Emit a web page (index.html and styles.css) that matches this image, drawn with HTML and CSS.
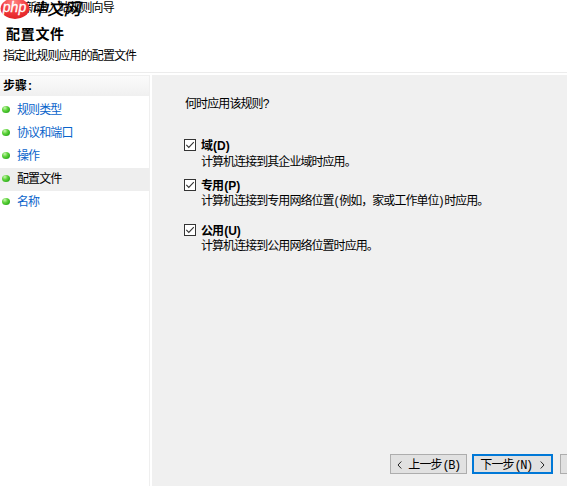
FILE: index.html
```html
<!DOCTYPE html>
<html lang="zh-CN">
<head>
<meta charset="utf-8">
<title>新建入站规则向导</title>
<link rel="stylesheet" href="styles.css">
</head>
<body>
<div class="wizard">
  <header class="header">
    <div class="titlebar">新建入站规则向导</div>
    <h1 class="title">配置文件</h1>
    <p class="subtitle">指定此规则应用的配置文件</p>
    <div class="watermark">
      <svg class="watermark-logo" width="30" height="20" viewBox="0 0 30 20">
        <defs>
          <radialGradient id="red" cx=".45" cy=".2" r=".85">
            <stop offset="0" stop-color="#ff8585"/>
            <stop offset=".5" stop-color="#f33c3e"/>
            <stop offset="1" stop-color="#df2024"/>
          </radialGradient>
        </defs>
        <ellipse cx="15" cy="8.5" rx="14.4" ry="10.4" fill="url(#red)"/>
        <text x="14.5" y="12" text-anchor="middle" class="logo-text">php</text>
      </svg>
      <span class="watermark-name">中文网</span>
    </div>
  </header>
  <div class="body">
    <nav class="sidebar">
      <h2 class="steps-title">步骤<span>:</span></h2>
      <ul class="steps">
        <li class="step"><i class="dot"></i>规则类型</li>
        <li class="step"><i class="dot"></i>协议和端口</li>
        <li class="step"><i class="dot"></i>操作</li>
        <li class="step current"><i class="dot"></i>配置文件</li>
        <li class="step"><i class="dot"></i>名称</li>
      </ul>
    </nav>
    <main class="content">
      <p class="question">何时应用该规则<span class="mark">?</span></p>
      <div class="option">
        <svg class="check" width="12" height="12" viewBox="0 0 12 12"><rect x=".5" y=".5" width="11" height="11"/><path d="M2.3 5.8 4.8 8.4 9.8 3.2"/></svg>
        <div><div class="name">域<b>(D)</b></div><div class="desc">计算机连接到其企业域时应用。</div></div>
      </div>
      <div class="option private">
        <svg class="check" width="12" height="12" viewBox="0 0 12 12"><rect x=".5" y=".5" width="11" height="11"/><path d="M2.3 5.8 4.8 8.4 9.8 3.2"/></svg>
        <div><div class="name">专用<b>(P)</b></div><div class="desc">计算机连接到专用网络位置<span class="paren">(</span>例如，家或工作单位<span class="paren">)</span>时应用。</div></div>
      </div>
      <div class="option public">
        <svg class="check" width="12" height="12" viewBox="0 0 12 12"><rect x=".5" y=".5" width="11" height="11"/><path d="M2.3 5.8 4.8 8.4 9.8 3.2"/></svg>
        <div><div class="name">公用<b>(U)</b></div><div class="desc">计算机连接到公用网络位置时应用。</div></div>
      </div>
      <footer class="buttons">
        <button class="button back"><svg width="5" height="8" viewBox="0 0 5 8"><path d="M4.3.5 1 4l3.3 3.5"/></svg><span>上一步<em>(B)</em></span></button>
        <button class="button next"><span>下一步<em>(N)</em></span><svg width="5" height="8" viewBox="0 0 5 8"><path d="M.7.5 4 4 .7 7.5"/></svg></button>
        <button class="button cancel" aria-label="取消"></button>
      </footer>
    </main>
  </div>
</div>
</body>
</html>
```
FILE: styles.css
```css
* { box-sizing: border-box; margin: 0; padding: 0; }
body {
  width: 567px;
  height: 486px;
  overflow: hidden;
  background: #fff;
  color: #000;
  font: 12px/16px "Liberation Sans", "Noto Sans CJK SC", sans-serif;
  letter-spacing: -0.9px;
  white-space: nowrap;
}
.wizard { height: 486px; display: flex; flex-direction: column; overflow: hidden; }

.header { position: relative; height: 73px; border-bottom: 1px solid #ececec; }
.titlebar { padding: 1px 0 0 25px; height: 24px; line-height: 14px; }
.title { padding-left: 6px; font-size: 14px; line-height: 20px; letter-spacing: 0.7px; }
.subtitle { padding: 4px 0 0 3px; }
.watermark { position: absolute; left: 0; top: 0; display: flex; height: 20px; }
.watermark-name {
  margin-left: 1px;
  font-size: 17px;
  line-height: 20px;
  font-weight: 500;
  font-style: italic;
  letter-spacing: -0.8px;
}
.logo-text {
  font: italic 14px "Liberation Sans", sans-serif;
  letter-spacing: 0;
  fill: #fff;
  stroke: #fff;
  stroke-width: 0.3px;
}

.body { flex: 1; display: flex; padding-top: 2px; }
.sidebar { width: 151px; margin-right: 2px; border-right: 1px solid #efefef; }
.steps-title {
  height: 21px;
  padding-left: 3px;
  font-size: 12px;
  line-height: 20px;
  letter-spacing: 0;
  background: linear-gradient(#fbfbfb, #f0f0f0);
  border-top: 1px solid #f0f0f0;
}
.steps-title span { font-weight: 700; margin-left: 1px; }
.steps { list-style: none; padding-top: 2px; }
.step {
  display: flex;
  align-items: center;
  height: 23.2px;
  width: 149px;
  padding-left: 2px;
  color: #0a64cb;
}
.step.current { background: #eee; color: #000; }
.dot {
  width: 8px;
  height: 7px;
  margin: 0 7px 1px 0;
  border-radius: 50%;
  background: radial-gradient(circle at 35% 28%, #c8f5b0 0, #5fd33c 38%, #2fae1c 75%, #49a83a 100%);
}

.content { flex: 1; display: flex; flex-direction: column; padding-left: 32px; background: #f0f0f0; }
.question { margin: 21px 0 26px 1px; }
.mark { margin-left: 0; }
.option { display: flex; gap: 5px; height: 40px; }
.option.private { height: 45px; }
.option.public { height: 40px; }
.check { margin-top: 1px; fill: #fff; stroke: #333; stroke-width: 1; flex: none; }
.check path { fill: none; stroke-width: 1.1; }
.name { font-weight: 700; line-height: 16px; }
.name b { letter-spacing: 0; margin-left: 1px; }
.desc { line-height: 16px; letter-spacing: -0.95px; }
.private .desc, .public .desc { line-height: 14px; }
.paren { margin: 0 1.5px 0 1px; }

.buttons { display: flex; margin-top: auto; margin-bottom: 12px; padding-left: 206px; }
.button {
  display: flex;
  align-items: center;
  justify-content: center;
  flex: none;
  height: 20px;
  border: 1px solid #adadad;
  background: #e1e1e1;
  color: #000;
  font: inherit;
  letter-spacing: -0.9px;
}
.button span { padding-top: 1px; }
.button svg { fill: none; stroke: #222; stroke-width: 1; margin-top: 1px; }
.button em { font: 12px "Liberation Mono", monospace; letter-spacing: -1.5px; margin-left: 1px; }
.back { width: 77px; gap: 6px; }
.next { width: 81px; margin-left: 5px; border: 2px solid #0078d7; gap: 8px; }
.cancel { width: 77px; margin-left: 7px; }
```
